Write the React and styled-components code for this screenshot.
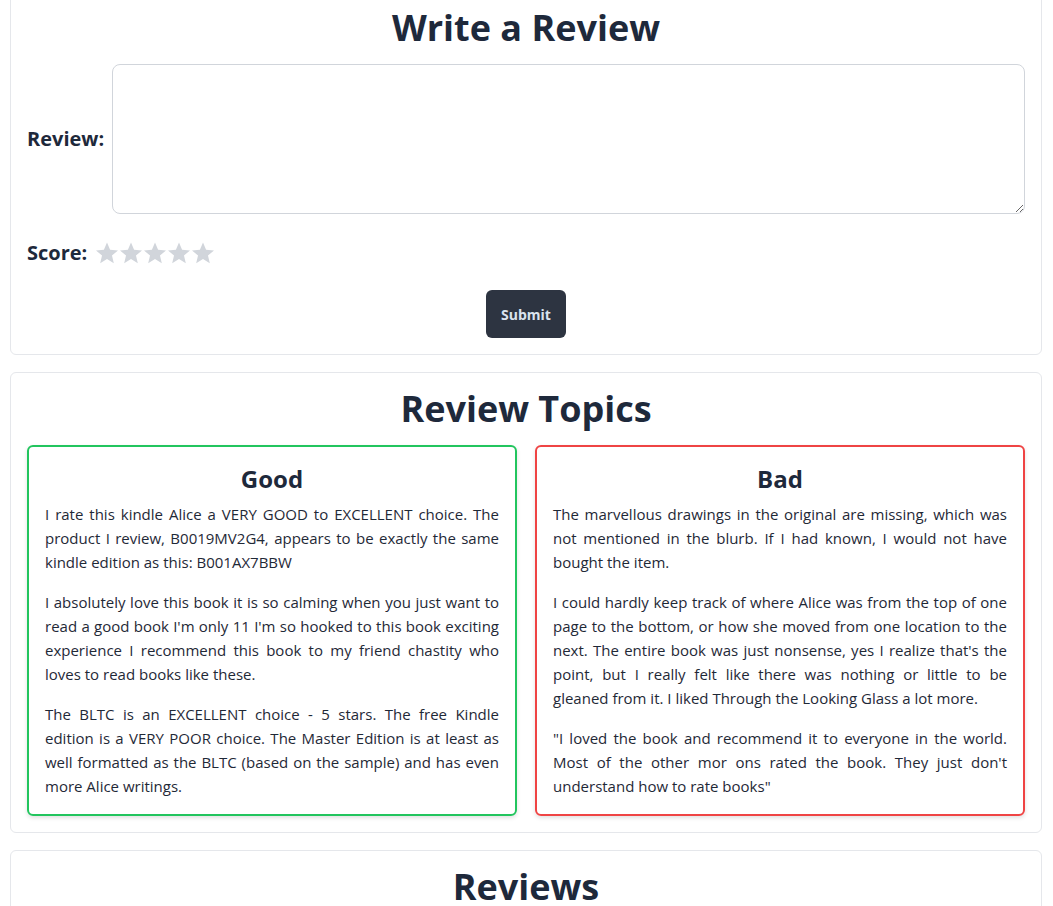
import React from "react";
import styled, { createGlobalStyle } from "styled-components";

const GlobalStyle = createGlobalStyle`
  html, body { margin: 0; padding: 0; background: #ffffff; }
  body {
    font-family: "Open Sans", "Noto Sans", "Liberation Sans", sans-serif;
    color: #1f2937;
  }
  * { box-sizing: border-box; }
`;

const Page = styled.div`
  display: flex;
  flex-direction: column;
  gap: 17px;
  padding: 0 11px 0 10px;
  margin-top: -9px;
`;

const Card = styled.section`
  border: 1px solid #e5e7eb;
  border-radius: 6px;
  background: #fff;
  padding: 16px;
`;

const Title = styled.h2`
  margin: 0 0 16px;
  font-size: 36px;
  line-height: 40px;
  font-weight: 700;
  text-align: center;
  color: #1e293b;
`;

const FieldRow = styled.div`
  display: flex;
  align-items: center;
  gap: 8px;
  margin-top: ${(p) => p.$mt || 0}px;
`;

const Label = styled.label`
  font-size: 20px;
  line-height: 28px;
  font-weight: 700;
  color: #1e293b;
`;

const TextArea = styled.textarea`
  flex: 1;
  height: 150px;
  border: 1px solid #d1d5db;
  border-radius: 8px;
  resize: vertical;
  font: inherit;
  padding: 8px;
`;

const Stars = styled.div`
  display: flex;
  align-items: center;
`;

const StarIcon = styled.svg`
  width: 24px;
  height: 24px;
  fill: ${(p) => (p.$on ? "#facc15" : "#d1d5db")};
`;

const Actions = styled.div`
  display: flex;
  justify-content: center;
  margin-top: 23px;
`;

const SubmitButton = styled.button`
  width: 80px;
  height: 48px;
  border: none;
  border-radius: 6px;
  background: #2d3441;
  color: #dbe3ee;
  font-family: inherit;
  font-size: 14px;
  font-weight: 700;
  cursor: pointer;
`;

const TopicGrid = styled.div`
  display: grid;
  grid-template-columns: 1fr 1fr;
  gap: 18px;
`;

const TopicBox = styled.div`
  border: 2px solid ${(p) => p.$color};
  border-radius: 6px;
  padding: 16px;
  box-shadow: 0 2px 4px rgba(0, 0, 0, 0.12);
`;

const TopicTitle = styled.h3`
  margin: 0 0 7px;
  font-size: 24px;
  line-height: 32px;
  font-weight: 700;
  text-align: center;
  color: #1e293b;
`;

const Para = styled.p`
  margin: 0 0 16px;
  font-size: 15px;
  line-height: 24px;
  text-align: justify;
  color: #1f2937;
  &:last-child { margin-bottom: 0; }
`;

const Star = ({ on }) => (
  <StarIcon $on={on} viewBox="0 0 24 24">
    <path d="M12 1.5l3.09 7.26 7.91.64-6.02 5.14 1.84 7.71L12 18.1l-6.82 4.15 1.84-7.71L1 9.4l7.91-.64z" />
  </StarIcon>
);

const good = [
  "I rate this kindle Alice a VERY GOOD to EXCELLENT choice. The product I review, B0019MV2G4, appears to be exactly the same kindle edition as this: B001AX7BBW",
  "I absolutely love this book it is so calming when you just want to read a good book I'm only 11 I'm so hooked to this book exciting experience I recommend this book to my friend chastity who loves to read books like these.",
  "The BLTC is an EXCELLENT choice - 5 stars. The free Kindle edition is a VERY POOR choice. The Master Edition is at least as well formatted as the BLTC (based on the sample) and has even more Alice writings.",
];

const bad = [
  "The marvellous drawings in the original are missing, which was not mentioned in the blurb. If I had known, I would not have bought the item.",
  "I could hardly keep track of where Alice was from the top of one page to the bottom, or how she moved from one location to the next. The entire book was just nonsense, yes I realize that's the point, but I really felt like there was nothing or little to be gleaned from it. I liked Through the Looking Glass a lot more.",
  "\"I loved the book and recommend it to everyone in the world. Most of the other mor ons rated the book. They just don't understand how to rate books\"",
];

export default function App() {
  return (
    <>
      <GlobalStyle />
      <Page>
        <Card>
          <Title>Write a Review</Title>
          <FieldRow>
            <Label htmlFor="review">Review:</Label>
            <TextArea id="review" />
          </FieldRow>
          <FieldRow $mt={25}>
            <Label>Score:</Label>
            <Stars>
              {[0, 1, 2, 3, 4].map((i) => (
                <Star key={i} on={false} />
              ))}
            </Stars>
          </FieldRow>
          <Actions>
            <SubmitButton>Submit</SubmitButton>
          </Actions>
        </Card>
        <Card>
          <Title>Review Topics</Title>
          <TopicGrid>
            <TopicBox $color="#22c55e">
              <TopicTitle>Good</TopicTitle>
              {good.map((t, i) => (
                <Para key={i}>{t}</Para>
              ))}
            </TopicBox>
            <TopicBox $color="#ef4444">
              <TopicTitle>Bad</TopicTitle>
              {bad.map((t, i) => (
                <Para key={i}>{t}</Para>
              ))}
            </TopicBox>
          </TopicGrid>
        </Card>
        <Card>
          <Title>Reviews</Title>
        </Card>
      </Page>
    </>
  );
}
